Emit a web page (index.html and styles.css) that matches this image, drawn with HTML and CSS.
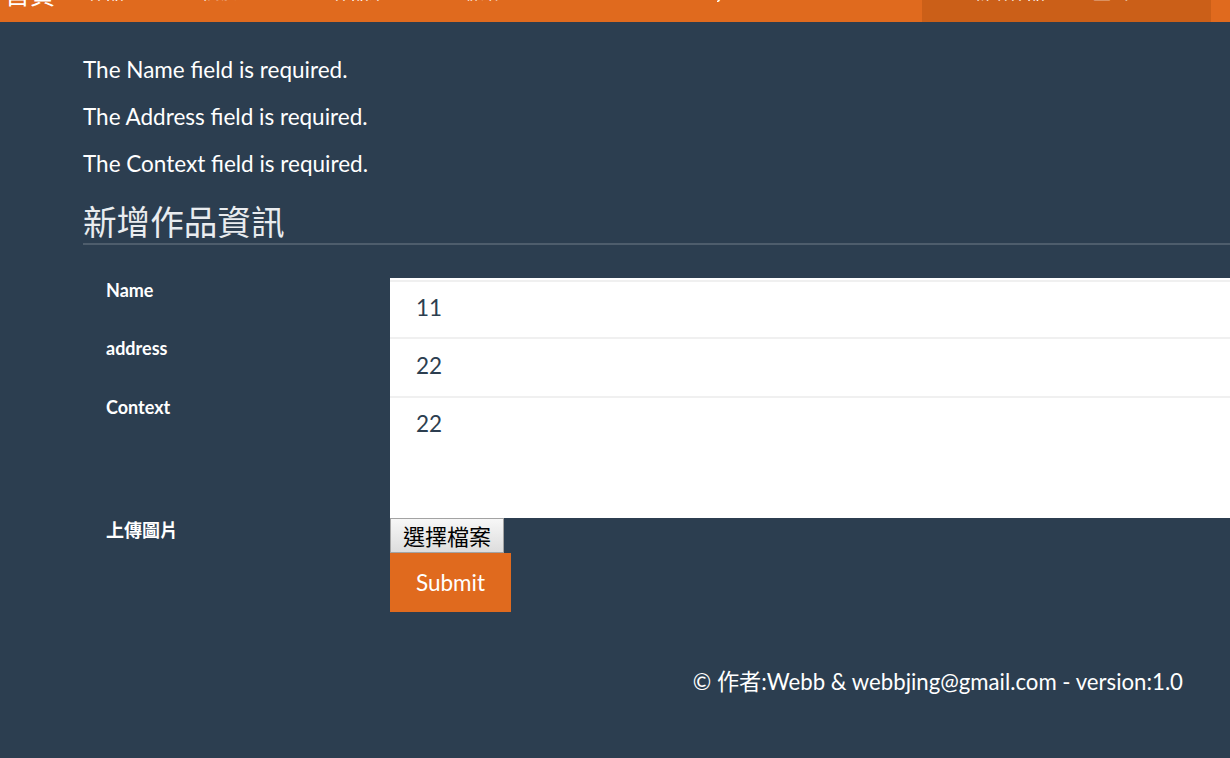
FILE: index.html
```html
<!DOCTYPE html>
<html lang="zh-Hant">
<head>
<meta charset="utf-8">
<title>新增作品資訊</title>
<link rel="stylesheet" href="styles.css">
</head>
<body>
<nav class="navbar">
  <div class="nav-slot w-brand"><a class="brand">首頁</a></div>
  <div class="nav-slot w1"><a class="nav-link">作品</a></div>
  <div class="nav-slot w2"><a class="nav-link">關於</a></div>
  <div class="nav-slot w3"><a class="nav-link">作品集</a></div>
  <div class="nav-slot w4"><a class="nav-link">聯絡</a></div>
  <div class="nav-slot w5"><a class="nav-link">j</a></div>
  <div class="nav-active">
    <div class="nav-slot wa"><span class="nav-link">新增作品</span></div>
    <div class="nav-slot wb"><span class="nav-link">登出 ▾</span></div>
  </div>
</nav>
<main class="content">
  <div class="errors">
    <p>The Name field is required.</p>
    <p>The Address field is required.</p>
    <p>The Context field is required.</p>
  </div>
  <h2 class="title">新增作品資訊</h2>
  <form class="form">
    <label class="label">Name</label>
    <input class="field first" type="text" value="11">
    <label class="label up">address</label>
    <input class="field second" type="text" value="22">
    <label class="label up">Context</label>
    <textarea class="field area">22</textarea>
    <label class="label cjk">上傳圖片</label>
    <div class="file-cell"><button type="button" class="file-btn">選擇檔案</button></div>
    <span></span>
    <div><button type="button" class="submit">Submit</button></div>
  </form>
  <footer class="footer">© 作者:Webb &amp; webbjing@gmail.com - version:1.0</footer>
</main>
</body>
</html>
```
FILE: styles.css
```css
html, body {
  margin: 0;
  padding: 0;
  overflow: hidden;
}
body {
  background: #2c3e50;
  color: #ffffff;
  font-family: Lato, "Noto Sans CJK TC", sans-serif;
  width: 1230px;
  height: 758px;
}
.navbar {
  height: 22px;
  background: #e06a1e;
  overflow: hidden;
  display: flex;
  align-items: flex-start;
  padding-left: 5px;
}
.nav-slot {
  flex: 0 0 auto;
  height: 22px;
  overflow: hidden;
  white-space: nowrap;
}
.w-brand { width: 83px; }
.w1 { width: 115px; }
.w2 { width: 130px; }
.w3 { width: 130px; }
.w4 { width: 254px; }
.w5 { width: 205px; }
.wa { width: 120px; }
.wb { width: 118px; }
.brand {
  display: block;
  font-family: "Noto Sans CJK TC", sans-serif;
  font-size: 25px;
  line-height: 25px;
  margin-top: -19px;
  color: #fff;
}
.nav-link {
  display: block;
  font-family: "Noto Sans CJK TC", sans-serif;
  font-size: 18px;
  line-height: 18px;
  margin-top: -18px;
  color: #fff;
}
.w5 .nav-link { margin-top: -17px; font-family: Lato, sans-serif; }
.nav-active {
  width: 289px;
  height: 22px;
  background: #cb5f18;
  display: flex;
  align-items: flex-start;
  padding-left: 51px;
  box-sizing: border-box;
}
.content {
  padding-left: 83px;
}
.errors {
  display: flex;
  flex-direction: column;
  gap: 15px;
  padding-top: 32px;
}
.errors p {
  margin: 0;
  font-size: 22.5px;
  line-height: 32px;
}
.title {
  margin: 21px 0 0;
  font-family: "Noto Sans CJK TC", sans-serif;
  font-weight: 400;
  font-size: 33.6px;
  line-height: 40px;
  color: #e9ecef;
  padding-bottom: 2px;
  border-bottom: 2px solid #4e5d6c;
}
.form {
  margin-top: 33px;
  display: grid;
  grid-template-columns: 307px 1fr;
}
.label {
  font-weight: 700;
  font-size: 18px;
  line-height: 22px;
  padding: 1px 0 0 23px;
  color: #fff;
}
.label.up { padding-top: 0; }
.label.cjk { padding-top: 1px; }
.field {
  display: block;
  width: 100%;
  box-sizing: border-box;
  margin: 0;
  border: 0;
  border-top: 2px solid #f0f0f0;
  background: #fff;
  color: #2c3e50;
  font-family: Lato, sans-serif;
  font-size: 22.5px;
  padding: 0 26px;
  height: 59px;
  outline: none;
}
.field.first {
  border-top: 0;
  box-shadow: inset 0 2px 0 #ffffff, inset 0 4px 0 #f0f0f0;
}
.field.second {
  padding-bottom: 5px;
}
.field.area {
  height: 122px;
  resize: none;
  padding-top: 12px;
  line-height: 27px;
}
.file-cell { height: 35px; }
.file-btn {
  height: 35px;
  margin: 0;
  padding: 0 12px;
  border: 1px solid #a3a3a3;
  border-radius: 0;
  background: linear-gradient(#f7f7f7, #dddddd);
  font-family: "Noto Sans CJK TC", sans-serif;
  font-size: 22px;
  line-height: 31px;
  color: #000;
}
.submit {
  width: 121px;
  height: 59px;
  margin: 0;
  border: 0;
  background: #e06a1e;
  color: #fff;
  font-family: Lato, sans-serif;
  font-size: 22.5px;
  padding: 0;
}
.footer {
  text-align: right;
  padding-right: 47px;
  margin-top: 55px;
  font-size: 22.2px;
  line-height: 30px;
  color: #fff;
}
```
